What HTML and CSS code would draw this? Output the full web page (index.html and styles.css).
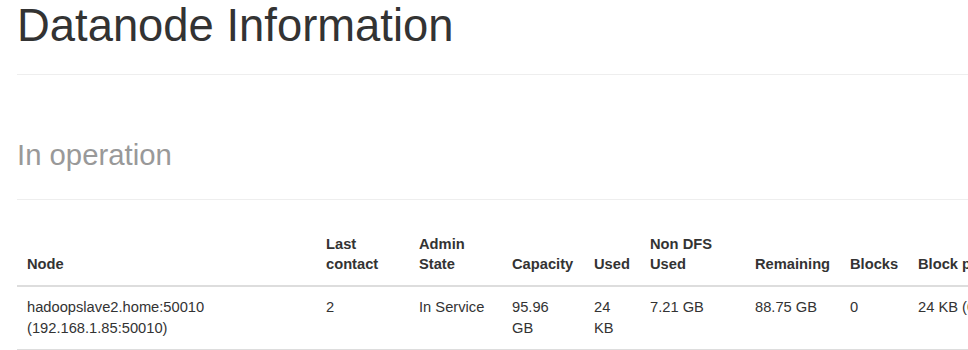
FILE: index.html
```html
<!DOCTYPE html>
<html lang="en">
<head>
<meta charset="utf-8">
<title>Datanode Information</title>
<link rel="stylesheet" href="styles.css">
</head>
<body>
<div class="container">
  <div class="page-header">
    <h1 class="title">Datanode Information</h1>
  </div>
  <div class="page-header">
    <h1 class="title"><small>In operation</small></h1>
  </div>
  <table class="table">
    <colgroup>
      <col class="c-node">
      <col class="c-contact">
      <col class="c-admin">
      <col class="c-capacity">
      <col class="c-used">
      <col class="c-nondfs">
      <col class="c-remaining">
      <col class="c-blocks">
      <col class="c-bpused">
      <col class="c-failed">
      <col class="c-version">
    </colgroup>
    <thead>
      <tr>
        <th>Node</th>
        <th>Last contact</th>
        <th>Admin State</th>
        <th>Capacity</th>
        <th>Used</th>
        <th>Non DFS Used</th>
        <th>Remaining</th>
        <th>Blocks</th>
        <th>Block pool used</th>
        <th>Failed Volumes</th>
        <th>Version</th>
      </tr>
    </thead>
    <tbody>
      <tr>
        <td>hadoopslave2.home:50010 (192.168.1.85:50010)</td>
        <td>2</td>
        <td>In Service</td>
        <td>95.96 GB</td>
        <td>24 KB</td>
        <td>7.21 GB</td>
        <td>88.75 GB</td>
        <td>0</td>
        <td>24 KB (0%)</td>
        <td>0</td>
        <td>2.7.3</td>
      </tr>
    </tbody>
  </table>
</div>
</body>
</html>
```
FILE: styles.css
```css
html, body {
  overflow: hidden;
}
body {
  margin: 0;
  background: #fff;
  color: #333;
  font-family: "Liberation Sans", Arial, sans-serif;
  font-size: 14.7px;
  line-height: 20.85px;
}
.container {
  padding: 0 0 0 17px;
  width: 1300px;
}
.page-header {
  margin: 50px 0 25px;
  padding-bottom: 11.25px;
  border-bottom: 1px solid #eee;
}
.page-header:first-child {
  margin-top: 0;
}
.title {
  margin: 25px 0 12.5px;
  font-size: 45.4px;
  font-weight: 500;
  line-height: 49.5px;
  color: #333;
}
.page-header:first-child .title {
  margin-top: 1px;
}
.title small {
  font-size: 29.3px;
  font-weight: normal;
  line-height: 1;
  color: #999;
}
.table {
  border-collapse: collapse;
  border-spacing: 0;
  table-layout: fixed;
  width: 1283px;
  margin-top: -1px;
}
.table th,
.table td {
  padding: 10px;
  text-align: left;
  vertical-align: top;
}
.table thead th {
  vertical-align: bottom;
  border-bottom: 2px solid #ddd;
  font-weight: bold;
}
.table tbody td {
  border-bottom: 1px solid #ddd;
}
.c-node { width: 299px; }
.c-contact { width: 93px; }
.c-admin { width: 93px; }
.c-capacity { width: 82px; }
.c-used { width: 56px; }
.c-nondfs { width: 105px; }
.c-remaining { width: 95px; }
.c-blocks { width: 68px; }
.c-bpused { width: 150px; }
.c-failed { width: 90px; }
.c-version { width: 152px; }
```
